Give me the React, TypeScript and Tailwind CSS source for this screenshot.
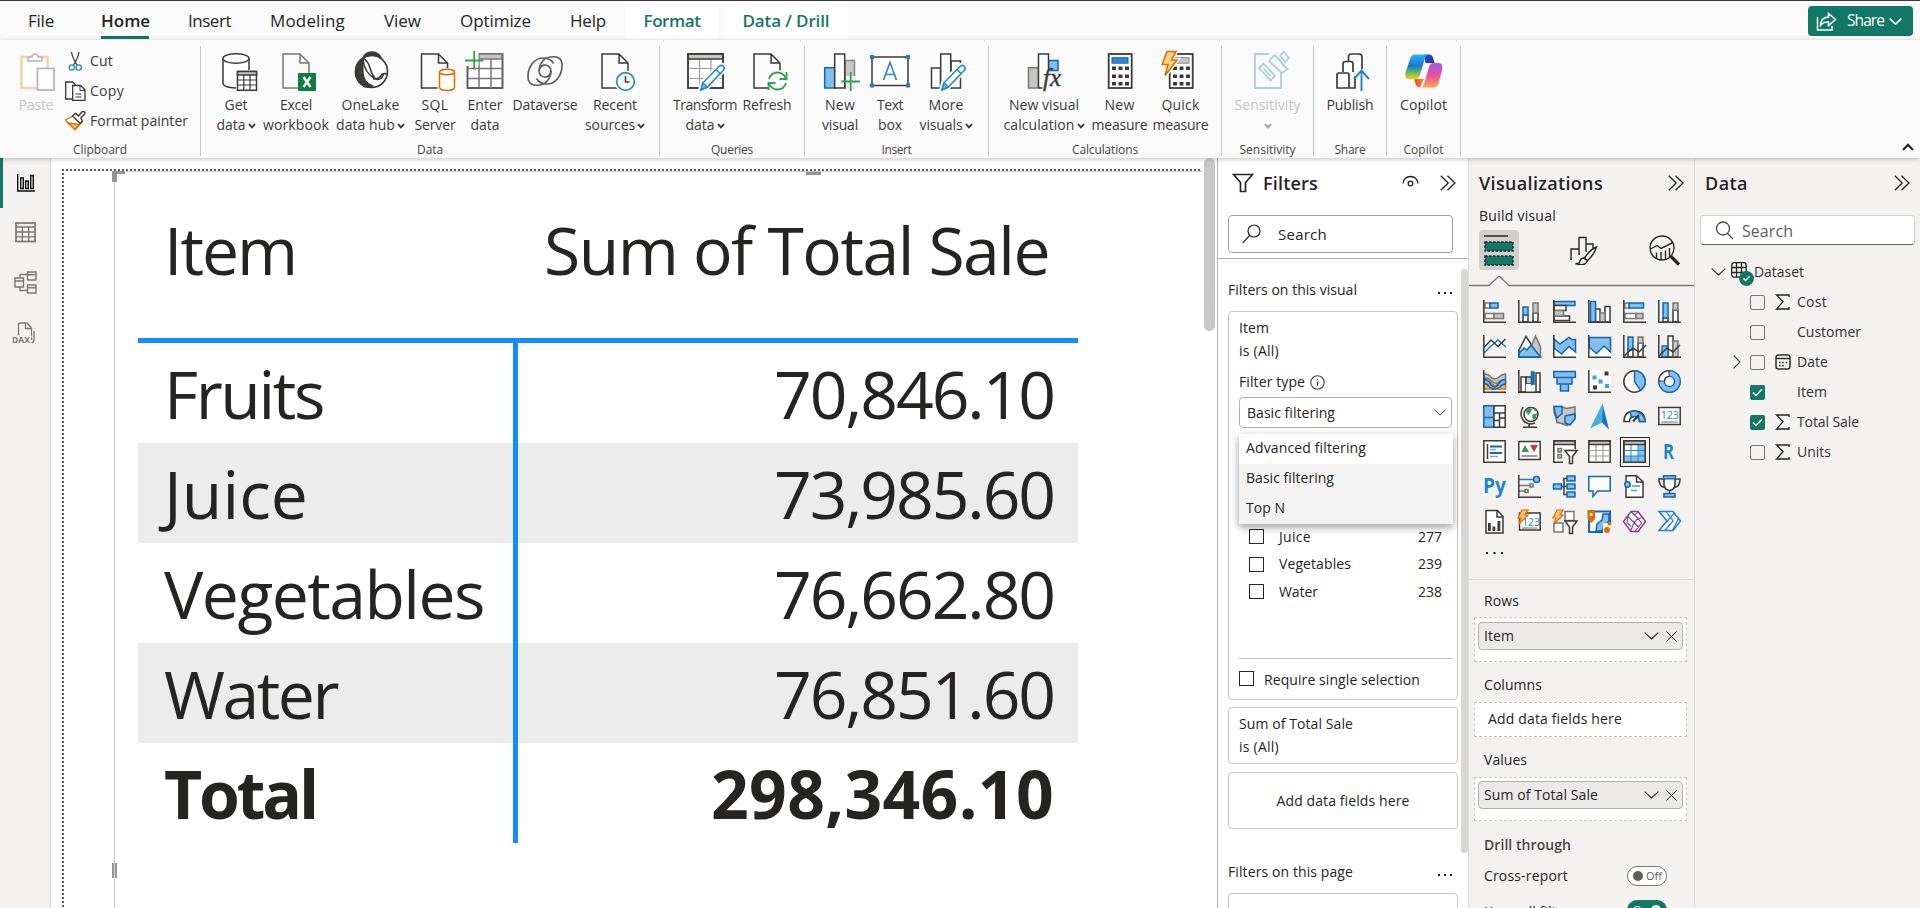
import { useLayoutEffect, useRef, type ReactNode } from "react";

const INK = "#3b3a39";
const GRAY = "#c8c6c4";
const BLUE = "#83beec";
const LINE = "#1068b0";

/** Single-line text whose tracking is tuned so that it takes exactly `w` pixels. */
function Fit({ w, children, className = "" }: { w: number; children: string; className?: string }) {
  const ref = useRef<HTMLSpanElement>(null);
  useLayoutEffect(() => {
    const el = ref.current;
    if (!el) return;
    el.style.letterSpacing = "0px";
    const natural = el.getBoundingClientRect().width;
    el.style.letterSpacing = `${(w - natural) / children.length}px`;
  }, [w, children]);
  return (
    <span ref={ref} className={`inline-block whitespace-pre ${className}`}>
      {children}
    </span>
  );
}

/* ---------- small shared glyphs ---------- */

function Caret({ className = "" }: { className?: string }) {
  return (
    <svg width="8" height="6" viewBox="0 0 8 6" className={className}>
      <path d="M1 1.2 4 4.4 7 1.2" fill="none" stroke="currentColor" strokeWidth="1.9" />
    </svg>
  );
}

function Chevron({ w = 15, h = 8, className = "" }: { w?: number; h?: number; className?: string }) {
  return (
    <svg width={w} height={h} viewBox="0 0 15 8" preserveAspectRatio="none" className={className}>
      <path d="M.7.7 7.5 7 14.3.7" fill="none" stroke="currentColor" strokeWidth="1.1" />
    </svg>
  );
}

function DoubleChevron() {
  return (
    <svg width="16" height="16" viewBox="0 0 16 16" fill="none" stroke="#252423" strokeWidth="1.3">
      <path d="M.8.7 8.2 8 .8 15.3M7.5.7 15 8l-7.500 7.300" />
    </svg>
  );
}

/* ---------- ribbon icons (40 x 40) ---------- */

function RibbonIcon({ children }: { children: ReactNode }) {
  return (
    <svg width="40" height="40" viewBox="0 0 40 40" fill="none" className="overflow-visible" stroke={INK} strokeWidth="1.5">
      {children}
    </svg>
  );
}

const Doc = ({ color = INK }: { color?: string }) => (
  <g stroke={color}>
    <path d="M7 4h17l9 9v25H7z" fill="#fafafa" />
    <path d="M24 4v9h9" />
  </g>
);

const Pencil = () => (
  <g>
    <path d="M15 40.500l2-8L34 15.500q2.500-2 5 .300 2 2.200 0 4.700L22.500 37.500z" fill="#fafafa" stroke="#fafafa" strokeWidth="4" />
    <path d="M16 39.800l2-7L34.300 16.200q2-1.700 4 0 1.800 2 .100 4L22.300 37z" fill="#fff" stroke="#1f86d0" />
    <path d="M16 39.800l2-7 4.300 4.200z" fill={BLUE} stroke="#1f86d0" />
    <path d="M31 19.500l4 4" stroke="#1f86d0" />
  </g>
);

const Grid4 = ({ x = 3 }: { x?: number }) => (
  <g transform={`translate(${x} 0)`}>
    <rect x="0" y="4" width="35" height="34" fill="#fff" />
    <path d="M11.500 9v29M23 9v29M0 18.500h35M0 28.500h35" stroke="#a19f9d" strokeWidth="1.200" />
    <rect x="0" y="4" width="35" height="5" fill={GRAY} />
    <rect x="0" y="4" width="35" height="34" />
  </g>
);

const Keypad = ({ accent }: { accent: boolean }) => (
  <g>
    <rect x="8.700" y="4" width="23" height="34" fill="#fff" strokeWidth="1.800" />
    <rect x="12" y="7.700" width="16" height="5.500" fill={accent ? "#2b88d8" : GRAY} stroke={accent ? LINE : "#8a8886"} strokeWidth="1" />
    <path
      d="M12 18.200h4m2.500 0h4m2.500 0h4M12 26.200h4m2.500 0h4m2.500 0h4M12 33.800h4m2.500 0h4m2.500 0h4"
      strokeWidth="3.500"
    />
  </g>
);

const GetDataIcon = () => (
  <RibbonIcon>
    <path d="M7 9v24.500q2 4.500 13.500 4.500V20H33V9z" fill="#fff" stroke="none" />
    <ellipse cx="20" cy="8.500" rx="13" ry="4.800" fill="#fff" />
    <path d="M7 9v24q0 4.500 13 5M33 9v11" />
    <rect x="21.500" y="21.500" width="19" height="18.800" fill="#fff" />
    <path d="M27.800 25v15M34 25v15M21 30h19M21 35h19" strokeWidth="1.200" />
    <rect x="21.500" y="21.500" width="19" height="3.500" fill={GRAY} />
  </RibbonIcon>
);

const ExcelIcon = () => (
  <RibbonIcon>
    <Doc color="#797775" />
    <rect x="22" y="23" width="18" height="18" fill="#107c41" stroke="none" rx="1" />
    <path d="M27.500 27l7 10M34.500 27l-7 10" stroke="#fff" strokeWidth="2.400" />
  </RibbonIcon>
);

const OneLakeIcon = () => (
  <RibbonIcon>
    <circle cx="20.500" cy="21.500" r="16" fill="#fff" strokeWidth="1.600" />
    <path d="M12 8q2-6 8.500-6T30 7.500q-10-5-18 .500z" fill={INK} />
    <path d="M11.500 9Q4 14 4.500 24q1.500 9 9 12.500 5 .500 8-.500-9-3.500-9.500-13T11.500 9z" fill={INK} />
    <path d="M12 9q1 14 12.500 20M12 8q5 3 7 10t5.500 11q5 2 8.500-5M22 29q7 0 9-5 3-1 5 0" />
  </RibbonIcon>
);

const SqlIcon = () => (
  <RibbonIcon>
    <g transform="translate(-.5 0)">
      <Doc />
    </g>
    <path d="M22.500 18h18v23h-18z" fill="#fafafa" stroke="none" />
    <path d="M24.500 22v15.500q1 3 7.500 3t7.500-3V22" fill="#fff" stroke="#e06c00" />
    <ellipse cx="32" cy="22" rx="7.500" ry="2.800" fill="#fff" stroke="#e06c00" />
  </RibbonIcon>
);

const EnterDataIcon = () => (
  <RibbonIcon>
    <rect x="2.500" y="4" width="35" height="34" fill="#fff" stroke="#605e5c" strokeWidth="2" />
    <path d="M14 9v29M26 9v29M2.500 18.500h35M2.500 28.500h35" stroke="#797775" />
    <path d="M14 4h23v5H14z" fill={GRAY} stroke="#797775" />
    <path d="M-.500 0h14v16h-14z" fill="#fafafa" stroke="none" />
    <path d="M0 10.500h18.500M9.200 1v18.500" stroke="#35a055" strokeWidth="1.800" />
  </RibbonIcon>
);

const Swirl = () => <path d="M26 21a6 6 0 1 1-6-6M26 21c0 6-4 13-11 14C7.500 36 3 34 3 26.500C3 16 10 8 18 8c5 0 8.500 2 10.500 5.500" />;

const DataverseIcon = () => (
  <RibbonIcon>
    <g stroke="#605e5c" strokeWidth="1.700">
      <Swirl />
      <g transform="rotate(180 20 21)">
        <Swirl />
      </g>
    </g>
  </RibbonIcon>
);

const RecentIcon = () => (
  <RibbonIcon>
    <Doc />
    <circle cx="30.500" cy="31.500" r="11" fill="#fafafa" stroke="none" />
    <circle cx="30.500" cy="31.500" r="8.800" fill="#fff" stroke="#2b88c8" strokeWidth="1.700" />
    <path d="M30.500 26v6h4" />
  </RibbonIcon>
);

const TransformIcon = () => (
  <RibbonIcon>
    <Grid4 />
    <Pencil />
  </RibbonIcon>
);

const RefreshIcon = () => (
  <RibbonIcon>
    <Doc />
    <circle cx="30.500" cy="31" r="11" fill="#fafafa" stroke="none" />
    <g stroke="#35a055" strokeWidth="1.800">
      <path d="M22 29q2-6.500 8.500-6.500 6 0 8.500 6M39 33q-2 6.500-8.500 6.500-6 0-8.500-6" />
      <path d="M39.500 22v7h-7M21.500 40v-7h7" />
    </g>
  </RibbonIcon>
);

const NewVisualIcon = () => (
  <RibbonIcon>
    <rect x="4.700" y="17.700" width="10" height="20.300" fill={BLUE} stroke={LINE} />
    <rect x="25" y="10.500" width="9.500" height="27.500" fill={GRAY} stroke="#8a8886" />
    <rect x="14.700" y="4" width="10" height="34" fill="#fff" />
    <path d="M26 26h10v14h-10z" fill="#fafafa" stroke="none" opacity=".8" />
    <path d="M21 31.500h19M30.700 22v19" stroke="#35a055" strokeWidth="1.800" />
  </RibbonIcon>
);

const TextBoxIcon = () => (
  <RibbonIcon>
    <rect x="2" y="7" width="36" height="28.500" fill="#fff" />
    <path d="M0 5h4v4H0zM36 5h4v4h-4zM0 33.500h4v4H0zM36 33.500h4v4h-4z" fill="#1f7ac0" stroke="none" />
    <path d="M13.500 30 20 12.500 26.500 30M15.500 24.500h9" stroke="#2b88d8" strokeWidth="1.700" />
  </RibbonIcon>
);

const MoreVisualsIcon = () => (
  <RibbonIcon>
    <path d="M5.500 18h9v20h-9zM25 11h9.500v27H25z" fill="#fff" />
    <rect x="14.700" y="4" width="10" height="34" fill="#fff" />
    <Pencil />
  </RibbonIcon>
);

const CalcIcon = () => (
  <RibbonIcon>
    <rect x="4.500" y="17.700" width="10" height="20.300" fill={GRAY} stroke="#797775" />
    <rect x="24.500" y="10.500" width="9.500" height="10" fill={BLUE} stroke={LINE} />
    <path d="M14.500 38V4h10v16M14.500 38h4" fill="#fff" />
    <text x="19" y="36" fontFamily="Liberation Serif, serif" fontStyle="italic" fontSize="25" fill={INK} stroke={INK} strokeWidth=".4">
      fx
    </text>
  </RibbonIcon>
);

const MeasureIcon = () => (
  <RibbonIcon>
    <Keypad accent />
  </RibbonIcon>
);

const QuickIcon = () => (
  <RibbonIcon>
    <Keypad accent={false} />
    <path d="M5.500 1.500H15L10.500 10H16L4 26l3-11.500H.800z" fill="#fafafa" stroke="#fafafa" strokeWidth="4" />
    <path d="M6 1.500h9L10.500 10H16L4 25.500l3-11H1.200z" fill="#ffd58a" stroke="#e06c00" strokeWidth="1.600" />
  </RibbonIcon>
);

const SensitivityIcon = () => (
  <RibbonIcon>
    <g stroke="#a9d0ea" strokeWidth="1.800">
      <path d="M21 4H7v34h26V22" />
      <path d="M11 18l4.500-4.500L27 26l-4.500 4.500zM15.500 18.500l7 7.500" fill="#fafafa" />
      <path d="M21 11l5.500-6 13 14-5.500 4z" fill="#fafafa" />
      <path d="M28 6l9 11M32 5.500l4-3.500 5 6-4 4z" fill="#fafafa" />
    </g>
  </RibbonIcon>
);

const PublishIcon = () => (
  <RibbonIcon>
    <g strokeWidth="1.700">
      <path d="M13 22v-8q0-2.500 2.500-2.500h5q2.500 0 2.500 2.500v8M18.500 11V7q0-3 3-3h7.500q3 0 3 3v12" />
      <path d="M19 38V25q0-2-2-2H9q-2 0-2 2v13h18V26" />
    </g>
    <path d="M31.500 41V21M24 29l7.500-8.500L39 29" stroke="#1f86c8" strokeWidth="1.900" />
  </RibbonIcon>
);

const CopilotIcon = () => (
  <RibbonIcon>
    <defs>
      <linearGradient id="cpA" x1="0" y1="0" x2="0" y2="1">
        <stop offset="0" stopColor="#27b5f5" />
        <stop offset=".45" stopColor="#1d74d8" />
        <stop offset=".7" stopColor="#55b85c" />
        <stop offset="1" stopColor="#f8d318" />
      </linearGradient>
      <linearGradient id="cpB" x1="0" y1="0" x2="0" y2="1">
        <stop offset="0" stopColor="#9a5cf2" />
        <stop offset=".5" stopColor="#e8509a" />
        <stop offset="1" stopColor="#ffa552" />
      </linearGradient>
      <linearGradient id="cpC" x1="0" y1="0" x2="1" y2="1">
        <stop offset="0" stopColor="#1a55cf" />
        <stop offset="1" stopColor="#2330a8" />
      </linearGradient>
      <linearGradient id="cpD" x1="0" y1="0" x2="1" y2="0">
        <stop offset="0" stopColor="#e8452c" />
        <stop offset="1" stopColor="#ff8a50" />
      </linearGradient>
    </defs>
    <g stroke="none">
      <path d="M20 4.500h5q3 0 4 3l1.500 5.500h-9z" fill="url(#cpC)" />
      <path d="M10 29h10l-4 8.500q-3 0-4.200-3z" fill="url(#cpD)" />
      <path d="M10.500 4.500H25q-3 0-4.200 4L16 25q-1.300 4.500-5 4.500H6q-6 0-4.500-6.500L6 9q1.400-4.500 4.500-4.500z" fill="url(#cpA)" />
      <path d="M30 13h4q5.500 0 4 7l-3.500 13q-1.300 4.500-5 4.500H16q3 0 4.200-4L25 17q1.300-4 5-4z" fill="url(#cpB)" />
    </g>
  </RibbonIcon>
);

/* ---------- ribbon ---------- */

type Item = { icon: ReactNode; l1: [string, number]; l2?: [string, number]; caret?: boolean; off?: boolean; w: string };

function RibbonItem({ icon, l1, l2, caret, off, w }: Item) {
  return (
    <div className={`flex shrink-0 flex-col items-center ${w} ${off ? "text-[#c8c6c4]" : "text-[#3b3a39]"}`}>
      {icon}
      <div className="mt-[5px] h-5 text-sm leading-5">
        <Fit w={l1[1]}>{l1[0]}</Fit>
      </div>
      <div className="flex h-5 items-center gap-0.5 text-sm leading-5">
        {l2 && <Fit w={l2[1]}>{l2[0]}</Fit>}
        {caret && <Caret className={off ? "mt-0.5 text-[#a19f9d]" : "mt-0.5"} />}
      </div>
    </div>
  );
}

function Group({ label, w, pad = "", children }: { label: [string, number]; w: string; pad?: string; children: ReactNode }) {
  return (
    <div className={`flex h-[110px] shrink-0 flex-col justify-between border-r border-[#c8c6c4] ${w}`}>
      <div className={`flex pt-1 ${pad}`}>{children}</div>
      <div className="flex h-3 items-center justify-center text-xs leading-3 text-[#484644]">
        <Fit w={label[1]}>{label[0]}</Fit>
      </div>
    </div>
  );
}

function Ribbon() {
  return (
    <div className="relative z-10 flex h-[118px] bg-[#fafafa] pt-[6px] shadow-[0_1px_5px_rgba(0,0,0,0.25)]">
      <Group label={["Clipboard", 54]} w="w-[201px]" pad="pl-[17px]">
        <div className="flex w-[38px] flex-col items-center text-[#c8c6c4]">
          <RibbonIcon>
            <path d="M5.500 7h26v31h-26z" fill="#fff" stroke="#f5d3a8" strokeWidth="2.500" />
            <path d="M12 11V7h4q0-3 3-3t3 3h4v4z" fill="#fafafa" stroke="#b8b6b4" />
            <rect x="21.500" y="18.500" width="16.500" height="21.500" fill="#fff" stroke="#b8b6b4" strokeWidth="1.800" />
          </RibbonIcon>
          <div className="mt-[5px] text-sm leading-5">
            <Fit w={35}>Paste</Fit>
          </div>
        </div>
        <div className="mt-px ml-[9px] flex flex-col gap-2.5 text-sm leading-5 text-[#3b3a39]">
          <div className="flex items-center gap-1">
            <svg width="22" height="20" viewBox="0 0 22 20" fill="none" stroke={INK} strokeWidth="1.300">
              <path d="M7.500 1q1 6 5.500 13M15 1q-1 6-5.500 13" />
              <circle cx="7.800" cy="16.500" r="2.600" stroke="#2b88c8" />
              <circle cx="14.700" cy="16.500" r="2.600" stroke="#2b88c8" />
            </svg>
            <Fit w={23}>Cut</Fit>
          </div>
          <div className="flex items-center gap-1">
            <svg width="22" height="20" viewBox="0 0 22 20" fill="none" stroke={INK} strokeWidth="1.300">
              <path d="M8.500 18H1.700V1h7l3 3" />
              <path d="M8.700 4.500h8l4.300 4.500v10.500H8.700z" fill="#fff" />
              <path d="M16 4.500V9.500h5M11.500 13h6M11.500 16h6" strokeWidth="1" />
            </svg>
            <Fit w={34}>Copy</Fit>
          </div>
          <div className="flex items-center gap-1">
            <svg width="22" height="20" viewBox="0 0 22 20" fill="none" strokeWidth="1.400">
              <path d="M1.500 9 10 4.500l7 7.500-6 6.500z" fill="#fff" stroke="#e06c00" />
              <path d="M4 12l11 1.500-4 5z" fill="#ffc46b" stroke="#e06c00" />
              <path d="M8.500 5l3-2.500 3 2.500L18 .800q2-1 3 .700 0 1.200-.700 2l-3.500 3.500 1.700 3-2.500 2.200z" fill="#fff" stroke={INK} />
            </svg>
            <Fit w={98}>Format painter</Fit>
          </div>
        </div>
      </Group>
      <Group label={["Data", 26]} w="w-[459px]" pad="pl-[5px]">
        <RibbonItem w="w-[60px]" icon={<GetDataIcon />} l1={["Get", 23]} l2={["data", 29]} caret />
        <RibbonItem w="w-[60px]" icon={<ExcelIcon />} l1={["Excel", 32]} l2={["workbook", 66]} />
        <RibbonItem w="w-[89px]" icon={<OneLakeIcon />} l1={["OneLake", 58]} l2={["data hub", 59]} caret />
        <RibbonItem w="w-[40px]" icon={<SqlIcon />} l1={["SQL", 27]} l2={["Server", 41]} />
        <RibbonItem w="w-[60px]" icon={<EnterDataIcon />} l1={["Enter", 35]} l2={["data", 29]} />
        <RibbonItem w="w-[60px]" icon={<DataverseIcon />} l1={["Dataverse", 65]} />
        <RibbonItem w="w-[80px]" icon={<RecentIcon />} l1={["Recent", 44]} l2={["sources", 50]} caret />
      </Group>
      <Group label={["Queries", 42]} w="w-[145px]" pad="pl-[15px]">
        <RibbonItem w="w-[60px]" icon={<TransformIcon />} l1={["Transform", 64]} l2={["data", 29]} caret />
        <RibbonItem w="w-[64px]" icon={<RefreshIcon />} l1={["Refresh", 49]} />
      </Group>
      <Group label={["Insert", 30]} w="w-[184px]" pad="pl-[10px]">
        <RibbonItem w="w-[50px]" icon={<NewVisualIcon />} l1={["New", 30]} l2={["visual", 36]} />
        <RibbonItem w="w-[50px]" icon={<TextBoxIcon />} l1={["Text", 26]} l2={["box", 24]} />
        <RibbonItem w="w-[62px]" icon={<MoreVisualsIcon />} l1={["More", 35]} l2={["visuals", 43]} caret />
      </Group>
      <Group label={["Calculations", 66]} w="w-[233px]" pad="pl-[11px]">
        <RibbonItem w="w-[88px]" icon={<CalcIcon />} l1={["New visual", 70]} l2={["calculation", 71]} caret />
        <RibbonItem w="w-[63px]" icon={<MeasureIcon />} l1={["New", 30]} l2={["measure", 56]} />
        <RibbonItem w="w-[59px]" icon={<QuickIcon />} l1={["Quick", 38]} l2={["measure", 56]} />
      </Group>
      <Group label={["Sensitivity", 56]} w="w-[92px]">
        <RibbonItem w="w-[91px]" icon={<SensitivityIcon />} l1={["Sensitivity", 66]} caret off />
      </Group>
      <Group label={["Share", 31]} w="w-[73px]">
        <RibbonItem w="w-[72px]" icon={<PublishIcon />} l1={["Publish", 47]} />
      </Group>
      <Group label={["Copilot", 40]} w="w-[74px]">
        <RibbonItem w="w-[73px]" icon={<CopilotIcon />} l1={["Copilot", 47]} />
      </Group>
      <div className="flex flex-1 items-end justify-end pr-1.5 pb-[7px]">
        <svg width="12" height="8" viewBox="0 0 12 8">
          <path d="M1 7 6 1.800 11 7" fill="none" stroke="#252423" strokeWidth="2" />
        </svg>
      </div>
    </div>
  );
}

function MenuBar() {
  const rest: [string, number][] = [
    ["Insert", 43],
    ["Modeling", 75],
    ["View", 37],
    ["Optimize", 71],
    ["Help", 36],
  ];
  return (
    <div className="flex h-10 items-start border-t border-[#3b3a39] bg-[#fafafa] text-[17px] leading-[22px] text-[#252423]">
      <div className="flex gap-[39px] pt-[9px] pl-7">
        <div className="w-[34px]">
          <Fit w={26}>File</Fit>
        </div>
        <div className="flex h-[29px] w-12 flex-col justify-between font-semibold">
          <Fit w={48}>Home</Fit>
          <div className="h-[3px] bg-[#117865]" />
        </div>
        {rest.map(([t, w]) => (
          <Fit key={t} w={w}>
            {t}
          </Fit>
        ))}
      </div>
      <div className="mt-0.5 ml-[19px] flex h-9 gap-[5px] font-semibold text-[#117865]">
        <div className="w-[94px] bg-white pt-[7px] text-center">
          <Fit w={57}>Format</Fit>
        </div>
        <div className="w-[124px] bg-white pt-[7px] text-center">
          <Fit w={87}>Data / Drill</Fit>
        </div>
      </div>
      <div className="mt-[5px] mr-[7px] ml-auto flex h-[30px] w-[105px] items-center rounded bg-[#117865] pl-2 text-base text-white">
        <svg width="21" height="19" viewBox="0 0 21 19" fill="none" stroke="#fff" strokeWidth="1.500">
          <path d="M1.500 5v13h14.500v-4" />
          <path d="M4.500 13.500q0-8 8-8.500V1.500L19.500 7.500l-7 6V10q-5-.500-8 3.500z" />
        </svg>
        <Fit w={37} className="ml-2.5 text-[15.500px]">
          Share
        </Fit>
        <Chevron w={13} h={7} className="ml-[5px] [&_path]:[stroke-width:1.8]" />
      </div>
    </div>
  );
}

/* ---------- left rail ---------- */

function Rail() {
  return (
    <div className="flex w-[51px] shrink-0 flex-col border-r border-[#d8d6d4] bg-[#f3f2f1]">
      <div className="flex h-[50px] items-center border-l-[3px] border-[#117865] pl-[13px]">
        <svg width="20" height="20" viewBox="0 0 20 20" fill="none" stroke="#111" strokeWidth="1.400">
          <path d="M1.700 1v17H19M4.700 5h2.600v10.500H4.700zM9.700 8h2.600v7.500H9.700zM14.700 2.500h2.600v13h-2.600z" />
        </svg>
      </div>
      <div className="flex h-[48px] items-center pl-[15px]">
        <svg width="21" height="21" viewBox="0 0 21 21" fill="none" stroke="#797775" strokeWidth="1.300">
          <rect x="1" y="1" width="19" height="18.500" strokeWidth="1.700" />
          <path d="M1 5h19M1 10h19M1 14.800h19M7.300 5v14.500M13.700 5v14.500" />
        </svg>
      </div>
      <div className="flex h-[53px] items-center pl-[14px]">
        <svg width="23" height="23" viewBox="0 0 23 23" fill="none" stroke="#797775" strokeWidth="1.400">
          <path d="M1 7h8.500v9H1zM13.500 1H22v8h-8.500zM13.500 14H22v8h-8.500zM1 10h8.500M13.500 3.800H22M13.500 16.800H22M6 7V3.500h7.500M6 16v3.500h7.500" />
        </svg>
      </div>
      <div className="flex h-[48px] items-center pl-[12px]">
        <svg width="24" height="22" viewBox="0 0 24 22" fill="none" stroke="#797775" strokeWidth="1.300">
          <path d="M6.500 13V2.500q0-1.500 1.500-1.500H15l4.500 5v12M13.500 1v5.500h5.500M22 9v9q0 3-4 3" />
          <text x="0" y="21" fontFamily="Open Sans, sans-serif" fontSize="8.500" fontWeight="700" fill="#797775" stroke="#f3f2f1" strokeWidth="2.500" paintOrder="stroke">
            DAX
          </text>
        </svg>
      </div>
    </div>
  );
}

/* ---------- canvas ---------- */

const rows: { name: string; nw: number; value: string; vw: number; alt?: boolean; bold?: boolean }[] = [
  { name: "Fruits", nw: 159, value: "70,846.10", vw: 280 },
  { name: "Juice", nw: 144, value: "73,985.60", vw: 280, alt: true },
  { name: "Vegetables", nw: 320, value: "76,662.80", vw: 280 },
  { name: "Water", nw: 173, value: "76,851.60", vw: 280, alt: true },
  { name: "Total", nw: 152, value: "298,346.10", vw: 343, bold: true },
];

function Canvas() {
  return (
    <div className="relative flex-1 overflow-hidden bg-white pt-[11px] pl-[11px]">
      <div className="h-0.5 w-[1140px] bg-[repeating-linear-gradient(90deg,#605e5c_0_2px,#fff_2px_4px)]" />
      <div className="flex h-[740px]">
        <div className="w-0.5 bg-[repeating-linear-gradient(180deg,#fff_0_2px,#605e5c_2px_4px)]" />
        <div className="relative ml-[50px] w-[1088px] border-t border-l border-[#c8c6c4] text-[66px] leading-[100px] text-[#252423]">
          <div className="absolute -top-px -left-[3px] h-[11px] w-[13px] border-t-[3px] border-l-[5px] border-[#979593]" />
          <div className="absolute top-0 left-[691px] h-[3px] w-[15px] bg-[#979593]" />
          <div className="absolute top-[691px] -left-[3px] flex h-[15px] w-[5px] justify-center bg-[#979593]">
            <div className="w-px bg-[#d8d6d4]" />
          </div>
          <div className="ml-[23px] w-[940px]">
            <div className="flex h-[171px] justify-between border-b-[5px] border-[#118dff] pt-[27px] pr-[29px] pl-[26px]">
              <Fit w={132}>Item</Fit>
              <Fit w={505}>Sum of Total Sale</Fit>
            </div>
            {rows.map((r) => (
              <div
                key={r.name}
                className={`grid h-[100px] grid-cols-[375px_5px_560px] ${r.alt ? "bg-[#ececec]" : ""} ${r.bold ? "font-bold" : ""}`}
              >
                <div className="pl-[26px]">
                  <Fit w={r.nw}>{r.name}</Fit>
                </div>
                <div className="bg-[#118dff]" />
                <div className="pr-6 text-right">
                  <Fit w={r.vw}>{r.value}</Fit>
                </div>
              </div>
            ))}
          </div>
        </div>
      </div>
      <div className="absolute top-0 right-[2px] h-[173px] w-[11px] rounded-full bg-[#c8c8c8]" />
    </div>
  );
}

/* ---------- filters ---------- */

const Box = () => <div className="size-[15px] shrink-0 border border-[#252423] bg-white" />;

function Dots() {
  return (
    <svg width="15" height="2" viewBox="0 0 15 2" fill="#252423" className="mt-1.5">
      <path d="M0 0h2v2H0zM6 0h2v2H6zM12 0h2v2h-2z" />
    </svg>
  );
}

function Filters() {
  const values: [string, number, string][] = [
    ["Juice", 32, "277"],
    ["Vegetables", 72, "239"],
    ["Water", 39, "238"],
  ];
  return (
    <div className="relative flex w-[251px] shrink-0 flex-col overflow-hidden border-l border-[#b3b0ad] bg-white text-sm leading-5 text-[#252423]">
      <div className="flex h-[50px] shrink-0 items-center pl-[14px]">
        <svg width="22" height="20" viewBox="0 0 22 20" fill="none" stroke="#252423" strokeWidth="1.700">
          <path d="M1.500 1.500h19l-7 8v9h-5v-9z" />
        </svg>
        <Fit w={55} className="ml-[9px] text-lg font-semibold">
          Filters
        </Fit>
        <svg width="17" height="13" viewBox="0 0 17 13" fill="none" stroke="#252423" strokeWidth="1.300" className="-mt-[3px] ml-[84px]">
          <path d="M1 8.500Q2 1.500 8.500 1.500T16 8.500" />
          <circle cx="8.500" cy="8.500" r="2.300" />
        </svg>
        <div className="ml-[21px]">
          <DoubleChevron />
        </div>
      </div>
      <div className="h-[51px] shrink-0 border-b border-[#b3b0ad] pt-[7px] pl-[10px]">
        <div className="flex h-[38px] w-[225px] items-center rounded-sm border border-[#a19f9d] pl-[13px]">
          <svg width="19" height="20" viewBox="0 0 19 20" fill="none" stroke="#252423" strokeWidth="1.200">
            <circle cx="12" cy="7" r="6" />
            <path d="M7.500 11.500 .800 18.800" />
          </svg>
          <Fit w={49} className="ml-[17px] text-[15px]">
            Search
          </Fit>
        </div>
      </div>
      <div className="shrink-0 pt-5 pl-[10px]">
        <div className="flex h-[22px] w-[225px] items-center justify-between">
          <Fit w={129}>Filters on this visual</Fit>
          <Dots />
        </div>
        <div className="mt-2.5 h-[389px] w-[230px] rounded-sm border border-[#c8c6c4] pt-1.5 pl-[10px]">
          <div className="h-5">
            <Fit w={30}>Item</Fit>
          </div>
          <div className="mt-[3px] h-5">
            <Fit w={40}>is (All)</Fit>
          </div>
          <div className="mt-[11px] flex h-5 items-center gap-[5px]">
            <Fit w={66}>Filter type</Fit>
            <svg width="15" height="15" viewBox="0 0 15 15" fill="none" stroke="#484644" strokeWidth="1.100">
              <circle cx="7.500" cy="7.500" r="6.700" />
              <path d="M7.500 6.500V11M7.500 4v1.200" />
            </svg>
          </div>
          <div className="relative mt-[5px] flex h-[31px] w-[213px] items-center justify-between rounded-sm border border-[#b3b0ad] pr-[5px] pl-[7px]">
            <Fit w={88}>Basic filtering</Fit>
            <Chevron w={12} h={7} />
            <div className="absolute top-9 -left-px z-10 w-[214px] bg-[#f3f3f3] leading-[28px] shadow-[0_3px_8px_rgba(0,0,0,0.4)]">
              <div className="h-[30px] bg-white pl-[7px]">
                <Fit w={120}>Advanced filtering</Fit>
              </div>
              <div className="h-[30px] pl-[7px]">
                <Fit w={88}>Basic filtering</Fit>
              </div>
              <div className="h-[30px] pl-[7px]">
                <Fit w={39}>Top N</Fit>
              </div>
            </div>
          </div>
          <div className="mt-[95px] w-[203px] pl-[10px]">
            {values.map(([name, w, n]) => (
              <div key={name} className="flex h-[27.500px] items-center">
                <Box />
                <Fit w={w} className="ml-[15px]">
                  {name}
                </Fit>
                <Fit w={24} className="ml-auto">
                  {n}
                </Fit>
              </div>
            ))}
          </div>
          <div className="mt-[52px] w-[213px] border-t border-[#c8c6c4]" />
          <div className="mt-[11px] flex h-5 items-center">
            <div className="-mt-[3px]">
              <Box />
            </div>
            <Fit w={156} className="ml-[10px]">
              Require single selection
            </Fit>
          </div>
        </div>
        <div className="mt-[7px] h-[57px] w-[230px] rounded-sm border border-[#c8c6c4] pt-1.5 pl-[10px]">
          <div className="h-5">
            <Fit w={114}>Sum of Total Sale</Fit>
          </div>
          <div className="mt-[3px] h-5">
            <Fit w={40}>is (All)</Fit>
          </div>
        </div>
        <div className="mt-2 flex h-[57px] w-[230px] items-center justify-center rounded-sm border border-[#c8c6c4]">
          <Fit w={133}>Add data fields here</Fit>
        </div>
        <div className="mt-8 flex h-[22px] w-[225px] items-center justify-between">
          <Fit w={125}>Filters on this page</Fit>
          <Dots />
        </div>
        <div className="mt-2.5 h-[57px] w-[230px] rounded-sm border border-[#c8c6c4]" />
      </div>
      <div className="absolute top-[111px] right-0 h-[584px] w-[7px] rounded-full bg-[#d8d7d6]" />
    </div>
  );
}

/* ---------- visual gallery (23 x 23 icons) ---------- */

const Axis = () => <path d="M.800 0v22.200H23" stroke={INK} />;
const Gy = "#797775";

const gallery: ReactNode[] = [
  <>
    <path d="M2 3h5v5H2zM2 13.500h9v5H2z" fill="#fff" stroke={Gy} />
    <path d="M7 3h8v5H7z" fill={BLUE} stroke={LINE} />
    <path d="M11 13.500h9.500v5H11z" fill={GRAY} stroke={Gy} />
    <Axis />
  </>,
  <>
    <path d="M5 15h5v7H5zM15 13h5v9h-5z" fill="#fff" stroke={INK} />
    <path d="M5 7h5v8H5z" fill={BLUE} stroke={LINE} />
    <path d="M15 3h5v10h-5z" fill={GRAY} stroke={Gy} />
    <Axis />
  </>,
  <>
    <path d="M1 1.500h21v4H1z" fill={BLUE} stroke={LINE} />
    <path d="M1 5.500h12v5H1zM1 16h15.500v4.500H1z" fill="#fff" stroke={INK} />
    <path d="M1 10.500h9.500V16H1z" fill={GRAY} stroke={Gy} />
    <Axis />
  </>,
  <>
    <path d="M7.500 9h4.500v13H7.500zM17 6.500h5V22h-5z" fill="#fff" stroke={INK} />
    <path d="M2.500 1.500h5V22h-5z" fill={BLUE} stroke={LINE} />
    <path d="M12 13h5v9h-5z" fill={GRAY} stroke={Gy} />
    <Axis />
  </>,
  <>
    <path d="M2 3h4v5H2zM2 13.500h11v5H2z" fill="#fff" stroke={Gy} />
    <path d="M6 3h14.500v5H6z" fill={BLUE} stroke={LINE} />
    <path d="M13 13.500h7v5h-7z" fill={GRAY} stroke={Gy} />
    <Axis />
  </>,
  <>
    <path d="M5 18h5v4H5zM15 10h5v12h-5z" fill="#fff" stroke={INK} />
    <path d="M5 3h5v15H5z" fill={BLUE} stroke={LINE} />
    <path d="M15 3h5v7h-5z" fill={GRAY} stroke={Gy} />
    <Axis />
  </>,
  <>
    <path d="M1 18 7 12l8-7 8 7" stroke="#1f7ac0" />
    <path d="M1 12.500 8 5l7 6.500L22.500 4" stroke={INK} />
    <Axis />
  </>,
  <>
    <path d="M1 15 8 1.500 15 12v10H1z" fill="#fff" stroke={INK} />
    <path d="M11 17 17.500 1 22.500 12v10H11z" fill={GRAY} stroke={Gy} />
    <path d="M1 22V18l5-5 3 2 4-5 9.500 12z" fill={BLUE} stroke={LINE} />
    <path d="M.800 14v8.200H23" stroke={LINE} />
  </>,
  <>
    <path d="M1 14l6 4.500 8-7 7.500 6V22H1z" fill="#fff" stroke="none" />
    <path d="M1 4l6 5 9-6.500 3 2h3.500V17L16 11.500 8.500 19 1 13z" fill={BLUE} stroke={LINE} />
    <Axis />
  </>,
  <>
    <path d="M1 2h21.500v20H1z" fill="#fff" stroke="none" />
    <path d="M1 2.500h21.500V17L16 11l-7.500 7.500L1 12z" fill={BLUE} stroke={LINE} />
    <Axis />
  </>,
  <>
    <path d="M5 14h5v8H5zM15 8h5v14h-5z" fill="#fff" stroke={INK} />
    <path d="M5 2h5v13H5z" fill={BLUE} stroke={LINE} />
    <path d="M15 2h5v6h-5z" fill={GRAY} stroke={Gy} />
    <path d="M1 21 10 13l6 4 7-7" stroke={INK} />
    <Axis />
  </>,
  <>
    <path d="M10 1h5v21h-5z" fill="#fff" stroke={INK} />
    <path d="M4 11h6v11H4z" fill={BLUE} stroke={LINE} />
    <path d="M15 6h5v16h-5z" fill={GRAY} stroke={Gy} />
    <path d="M1 21 9 13l6 4 7-7" stroke={INK} />
    <Axis />
  </>,
  <>
    <path d="M1 12h6l5 4 4-3h6.500v6H1z" fill="#fbb35c" stroke="#e06c00" />
    <path d="M1 4q5 0 8 4 4 2 7-1 3-3 6.500-3v6q-5 0-8 3-3 1-6-2-3-3-7.500-3z" fill={GRAY} stroke={Gy} />
    <path d="M1 9q5 1 7 6 3.500 4 7 0 3-6 7.500-5v4q-3.500 0-5.500 3-5.500 4-10.500 0-2-3-5.500-4z" fill={BLUE} stroke={LINE} />
    <Axis />
  </>,
  <>
    <path d="M3 7h5v15H3zM18 3h4v19h-4z" fill="#fff" stroke={INK} />
    <path d="M8 7h6v7H8z" fill={GRAY} stroke={INK} />
    <path d="M8 14h5v8H8z" fill="#fff" stroke="none" />
    <path d="M13.500 2h2.500v12h-2.500z" fill="#1f7ac0" stroke={LINE} />
    <Axis />
  </>,
  <>
    <path d="M.800 1.500h21.500v6H.800zM4 7.500h15V14H4zM7.500 14h8v7h-8z" fill={BLUE} stroke={LINE} />
  </>,
  <>
    <path d="M1 1h22v21H1z" fill="#fff" stroke="none" opacity=".6" />
    <path d="M16.500 1.500h4v4h-4zM5 15.500h4v4H5z" fill={INK} stroke="none" />
    <path d="M4.500 5.500h4v4h-4zM10.500 9.500h4v4h-4zM17 14h4v4h-4z" fill="#4a9fdc" stroke="none" />
    <Axis />
  </>,
  <>
    <circle cx="11.500" cy="11.500" r="10.700" fill="#fff" stroke={INK} />
    <path d="M11.500.800a10.700 10.700 0 0 1 6 19.500l-6-8.800z" fill={BLUE} stroke={LINE} />
  </>,
  <>
    <circle cx="11.500" cy="11.500" r="8" stroke={LINE} strokeWidth="7" />
    <circle cx="11.500" cy="11.500" r="8" stroke={BLUE} strokeWidth="4.500" />
    <path d="M3.500 11.500a8 8 0 0 1 8-8" stroke={INK} strokeWidth="7" />
    <path d="M3.500 10.500a8 8 0 0 1 7-7" stroke="#fff" strokeWidth="4.500" />
  </>,
  <>
    <path d="M.800.800H11v21.400H.800z" fill={BLUE} stroke={LINE} />
    <path d="M11 .800h11.200v21.400H11zM11 8h11M11 15.500h5.500M16.500 8v14.200M16.500 13h6" fill="#fff" stroke={INK} />
    <path d="M.800 12.500H11" stroke={LINE} />
  </>,
  <>
    <circle cx="13" cy="9.500" r="7" fill="#fff" stroke={INK} />
    <path d="M8 6q3-3 6-2l-1 3-3 3zM14 10l5-2-1 5-3 2zM16 3.500l3 2-2 1z" fill="#2d9a4c" stroke="none" />
    <path d="M5 2Q1 9 5 15t12 3M11 18v4M5 22.200h14" stroke={INK} />
  </>,
  <>
    <path d="M1 1.500h8l4 2 9-1.500v11l-5 2.500-3 5-5-2-5-1-1-5-2-5z" fill={GRAY} stroke={Gy} />
    <path d="M1 1.500h8v7L4 13 2 8zM12 11l10-2v5l-5 6-5-2z" fill={BLUE} stroke={LINE} />
  </>,
  <>
    <path d="M14.500-1 2 24l12-6z" fill="#45b0dc" stroke="none" transform="translate(0 -.5)" />
    <path d="M14.500-1l6.500 26-7-7z" fill="#1274c8" stroke="none" transform="translate(0 -.5)" />
  </>,
  <>
    <path d="M1 16.500Q1 6 11.500 6T22 16.500h-5.500q0-5-5-5t-5 5z" fill="#fff" stroke={INK} />
    <path d="M7 7q4-2 9 .500 6 3 6 9h-5.500q0-4-3-5-4-.500-5 1z" fill={BLUE} stroke={LINE} />
    <path d="M10 16.500 16 10" stroke={INK} strokeWidth="2.200" />
  </>,
  <>
    <path d="M.800 2.500h21.400v17H.800z" fill="#fff" stroke={INK} />
    <text x="2.800" y="14" fontFamily="Open Sans, sans-serif" fontSize="10.500" fill="#1f86c8" stroke="none">
      123
    </text>
    <path d="M3 17h17" stroke="#a19f9d" />
  </>,
  <>
    <path d="M.800.800h21.400v21.400H.800z" fill="#fff" stroke={INK} />
    <path d="M4.500 4v15" stroke={INK} />
    <path d="M7 6.500h12M7 13h12" stroke={LINE} strokeWidth="2" />
    <path d="M7 9.500h6M7 16.500h8" stroke="#a19f9d" />
  </>,
  <>
    <path d="M.800 1.500h21.400v18H.800z" fill="#fff" stroke={INK} />
    <path d="M3.500 12 7 5l4 7z" fill="#2d9a4c" stroke="none" />
    <path d="M12 5h8l-4 7z" fill="#e02c34" stroke="none" />
    <path d="M3.500 16h16" stroke={Gy} />
  </>,
  <>
    <path d="M.800.800h21.400v21.400H.800z" fill="#fff" stroke={INK} />
    <path d="M1 1h21v3.500H1z" fill={GRAY} stroke={INK} />
    <path d="M5 8.500h3.500V12H5zM5 14.500h3.500V18H5z" fill={GRAY} stroke={Gy} />
    <path d="M10 9h14v14H10z" fill="#f3f2f1" stroke="none" />
    <path d="M12 10.500h12l-4.500 6v7h-3v-7z" fill="#fff" stroke={INK} />
  </>,
  <>
    <path d="M.800.800h21.400v21.400H.800z" fill="#fff" stroke={INK} />
    <path d="M8 4.500V22M15 4.500V22M1 10.500h21M1 16h21" stroke="#a19f9d" strokeWidth="1.200" />
    <path d="M1 1h21v3.500H1z" fill={GRAY} stroke={INK} />
  </>,
  <>
    <path d="M.800.800h21.400v21.400H.800z" fill="#fff" stroke={INK} />
    <path d="M1 16h7v6H1zM8 16h7v6H8zM15 5h7v17h-7z" fill={BLUE} stroke="none" />
    <path d="M8 4.500V22M15 4.500V22M1 10.500h21M1 16h21" stroke="#1f86d0" strokeWidth="1" />
    <path d="M.800.800h21.400v21.400H.800z" stroke={INK} />
    <path d="M1 1h21v3.500H1z" fill={GRAY} stroke={INK} />
  </>,
  <text x="5" y="19" fontFamily="Open Sans, sans-serif" fontSize="21" fontWeight="700" fill="#1f86c8" stroke="none" textLength="11" lengthAdjust="spacingAndGlyphs">
    R
  </text>,
  <text x="0" y="18" fontFamily="Open Sans, sans-serif" fontSize="21" fontWeight="700" fill="#1f86c8" stroke="none" textLength="23" lengthAdjust="spacingAndGlyphs">
    Py
  </text>,
  <>
    <path d="M1 4.500h15" stroke="#1f7ac0" />
    <circle cx="18.500" cy="4.500" r="3" fill={BLUE} stroke={LINE} />
    <path d="M1 10.500h11M1 16h6" stroke={Gy} />
    <path d="M12 9h3v3h-3zM7 14.500h3v3H7z" fill="#fff" stroke={Gy} />
    <Axis />
  </>,
  <>
    <path d="M8 11.500h6M14 3.500h-3v16h3" stroke={INK} />
    <path d="M.500 9h8v5h-8zM14 1h8v5h-8zM14 9h8v5h-8zM14 17h8v5h-8z" fill={BLUE} stroke={LINE} />
  </>,
  <path d="M.800 1.500h21.400v14.500H9.500L5 21.500V16H.800z" fill="#fff" stroke={LINE} />,
  <>
    <path d="M3 .800h10.500l6.500 6v15.400H3z" fill="#fff" stroke={INK} />
    <path d="M13.500 1v6H20" stroke={INK} />
    <path d="M9 11h8M8 15.500h6" stroke="#4a9fdc" />
    <path d="M0 7h5v5H0z" fill="#f3f2f1" stroke="none" />
    <circle cx="4.500" cy="9.500" r="2.700" fill={BLUE} stroke={LINE} />
  </>,
  <>
    <path d="M6 4H1q0 8 6 8.500M17 4h5q0 8-6 8.500" stroke={INK} />
    <path d="M6 1.500h11V10q-1 5-5.500 5.500Q7 15 6 10z" fill="#fff" stroke={INK} />
    <path d="M11.500 15v4" stroke={INK} />
    <path d="M5.500.800h12v3h-12zM6 18.500h11v3.500H6z" fill={BLUE} stroke={LINE} />
  </>,
  <>
    <path d="M3 .500h11.500L20 6.500V23H3z" fill="#fff" stroke={INK} />
    <path d="M14 .500v6.500h6" stroke={INK} />
    <path d="M5 13h2.800v8H5zM9.500 16.500h2.800V21H9.500zM14.500 11h2.800v10h-2.800z" fill={INK} stroke="none" />
  </>,
  <>
    <path d="M1.500 3h20.700v17H1.500z" fill="#fff" stroke={INK} />
    <text x="4" y="15.500" fontFamily="Open Sans, sans-serif" fontSize="10.500" fill="#1f86c8" stroke="none">
      123
    </text>
    <path d="M4 18h15" stroke="#a19f9d" />
    <path d="M4 0h6L7 5h3L1 14l2-6H0z" fill="#ffc46b" stroke="#e06c00" strokeWidth="1.200" />
  </>,
  <>
    <path d="M12 1.500h9v9h-9zM1 13h9v9H1z" fill="#fff" stroke={Gy} />
    <path d="M12 11h12l-4.500 6v6.500h-3V17z" fill="#fff" stroke={INK} />
    <path d="M4 0h6L7 5h3L1 14l2-6H0z" fill="#ffc46b" stroke="#e06c00" strokeWidth="1.200" />
  </>,
  <>
    <path d="M1 1.500h21v20.500H1z" fill="#fff" stroke={LINE} strokeWidth="2" />
    <path d="M21 4h-6l-1 6-5 4-1 7h6l2-5 5-5z" fill={BLUE} stroke={LINE} />
    <path d="M15 13h9v11h-9z" fill="#f3f2f1" stroke="none" />
    <path d="M-.500 0h7.500v9L3.500 13-.500 9z" fill="#e06c00" stroke="none" />
    <circle cx="3.200" cy="4.500" r="1.500" fill="#fff" stroke="none" />
    <circle cx="19" cy="20" r="3" fill="#e06c00" stroke="none" />
    <circle cx="21.500" cy="13.500" r="2" fill="#e06c00" stroke="none" />
  </>,
  <>
    <path d="M8 1.500h7l7.500 10L15 21.500H8L.500 11.500z" fill="#fff" stroke="#8b3a9c" />
    <path d="M8 1.500l7 7-4 4-6-6M15 1.500l-3.500 4M15 8.500l4.500-1M15 8.500l3.500 4.500-6.500 8.500M11 12.500l-3.500 9M11 12.500l5 5M5 6.500l-1 6 4 4" stroke="#8b3a9c" strokeWidth="1.100" />
  </>,
  <>
    <path d="M1 1.500h14l7.500 9.500L15 20.500H1L9 11z" fill="#fff" stroke="#1a7ee0" />
    <path d="M8 1.500l7 9.500-8 9.500M6 14.500L16.500 3M14.500 20.500L20.500 8.500" stroke="#1a7ee0" strokeWidth="1.200" />
  </>,
];

function Chip({ label, w }: { label: string; w: number }) {
  return (
    <div className="flex h-7 items-center rounded-sm border border-[#b3b0ad] bg-[#ebeae9] pr-[5px] pl-[5px]">
      <Fit w={w}>{label}</Fit>
      <Chevron w={15} h={8} className="ml-auto" />
      <svg width="11" height="11" viewBox="0 0 11 11" className="ml-[7px]">
        <path d="M.600.600l9.800 9.800M10.400.600.600 10.400" stroke="#252423" strokeWidth="1" />
      </svg>
    </div>
  );
}

function Visualizations() {
  return (
    <div className="flex w-[226px] shrink-0 flex-col overflow-hidden border-l border-[#dcdad8] bg-[#f3f2f1] text-sm leading-5 text-[#252423]">
      <div className="flex h-[50px] shrink-0 items-center justify-between pr-[10px] pl-[10px]">
        <Fit w={124} className="text-lg font-semibold">
          Visualizations
        </Fit>
        <DoubleChevron />
      </div>
      <div className="h-[22px] shrink-0 pl-[10px] leading-[15px] font-medium">
        <Fit w={77}>Build visual</Fit>
      </div>
      <div className="flex h-10 shrink-0 items-center pl-[10px]">
        <div className="flex size-10 items-center justify-center rounded-sm bg-[#d2d0ce]">
          <svg width="30" height="32" viewBox="0 0 30 32">
            <path d="M0 2h24" stroke="#252423" strokeWidth="1.500" />
            <rect x="1" y="8" width="28" height="9" fill="#117865" stroke="#252423" strokeWidth="1.500" strokeDasharray="2.500 1.500" />
            <rect x="1" y="22" width="28" height="9" fill="#117865" stroke="#252423" strokeWidth="1.500" strokeDasharray="2.500 1.500" />
          </svg>
        </div>
        <svg width="28" height="29" viewBox="0 0 28 29" fill="none" stroke="#252423" strokeWidth="1.400" className="ml-[51px]">
          <path d="M1 24V13h8M9 19V1.500h7V16M16 8h7v4" />
          <path d="M26.500 11q-6 2-12 11l2.500 3q7-6 9.500-14z" fill="#f3f2f1" />
          <path d="M13.500 22q-3 0-3.500 3.500-1 3-4.500 2 5 2 9 .500 3-1.500 2.500-3.500z" fill="#f3f2f1" />
        </svg>
        <svg width="31" height="31" viewBox="0 0 31 31" fill="none" stroke="#252423" strokeWidth="1.400" className="ml-[51px]">
          <circle cx="13" cy="13" r="12" />
          <path d="M1.500 14 8 10.500l4 3L24 7.500M7.500 24v-6.500M12 25v-8M16.500 24.500v-9M20.500 22v-9" />
          <path d="M22 21.500l8 8" strokeWidth="3.200" />
        </svg>
      </div>
      <svg width="225" height="12" viewBox="0 0 225 12" fill="none" stroke="#797775" strokeWidth="1.300" className="mt-1.5 shrink-0">
        <path d="M0 9.500h20l10-9.500 10 9.500h185" />
      </svg>
      <div className="mt-[6px] grid shrink-0 auto-rows-[35px] grid-cols-[repeat(6,35px)] pl-2">
        {gallery.map((g, i) => (
          <div key={i} className="flex items-center justify-center">
            <div className={i === 28 ? "-m-1 flex size-[30px] items-center justify-center border border-[#252423]" : "flex"}>
              <svg width="23" height="23" viewBox="0 0 23 23" fill="none" strokeWidth="1.500" className="shrink-0 overflow-visible">
                {g}
              </svg>
            </div>
          </div>
        ))}
      </div>
      <div className="h-[41px] shrink-0 border-b border-[#dcdad8] pt-[13px] pl-[17px]">
        <svg width="18" height="2" viewBox="0 0 18 2" fill="#252423">
          <path d="M0 0h2v2H0zM7.500 0h2v2h-2zM15 0h2v2h-2z" />
        </svg>
      </div>
      <div className="mt-[11px] h-5 shrink-0 pl-[15px]">
        <Fit w={35}>Rows</Fit>
      </div>
      <div className="mt-[6px] ml-[5px] h-[45px] w-[213px] shrink-0 border border-dashed border-[#c8c6c4] bg-white px-[3px] pt-1">
        <Chip label="Item" w={30} />
      </div>
      <div className="mt-[13px] h-5 shrink-0 pl-[15px]">
        <Fit w={58}>Columns</Fit>
      </div>
      <div className="mt-[7px] ml-[5px] h-[35px] w-[213px] shrink-0 border border-dashed border-[#c8c6c4] bg-white pl-[13px] leading-[31px]">
        <Fit w={134}>Add data fields here</Fit>
      </div>
      <div className="mt-[13px] h-5 shrink-0 pl-[15px]">
        <Fit w={43}>Values</Fit>
      </div>
      <div className="mt-[7px] ml-[5px] h-11 w-[213px] shrink-0 border border-dashed border-[#c8c6c4] bg-white px-[3px] pt-[3px]">
        <Chip label="Sum of Total Sale" w={114} />
      </div>
      <div className="mt-[14px] h-5 shrink-0 pl-[15px] font-semibold text-[#484644]">
        <Fit w={87}>Drill through</Fit>
      </div>
      <div className="mt-[11px] flex h-5 shrink-0 items-center pl-[15px]">
        <Fit w={84}>Cross-report</Fit>
        <div className="ml-[59px] flex h-5 w-10 items-center gap-[3px] rounded-full border border-[#797775] bg-white pl-[5px] text-[11px] text-[#605e5c]">
          <div className="size-[10px] rounded-full bg-[#605e5c]" />
          <Fit w={16}>Off</Fit>
        </div>
      </div>
      <div className="mt-[14px] flex h-5 shrink-0 items-start pl-[15px]">
        <div className="mt-[2px] w-[143px]">
          <Fit w={93}>Keep all filters</Fit>
        </div>
        <div className="flex h-5 w-10 shrink-0 items-center gap-[3px] rounded-full bg-[#117865] pl-[6px] text-[11px] text-white">
          <Fit w={15}>On</Fit>
          <div className="size-[10px] rounded-full bg-white" />
        </div>
      </div>
    </div>
  );
}

/* ---------- data pane ---------- */

type Field = { name: string; w: number; on?: boolean; kind?: "sum" | "date" };

const fields: Field[] = [
  { name: "Cost", w: 30, kind: "sum" },
  { name: "Customer", w: 64 },
  { name: "Date", w: 31, kind: "date" },
  { name: "Item", w: 30, on: true },
  { name: "Total Sale", w: 62, on: true, kind: "sum" },
  { name: "Units", w: 34, kind: "sum" },
];

function DataPane() {
  return (
    <div className="flex w-[226px] shrink-0 flex-col border-l border-[#dcdad8] bg-[#f3f2f1] text-sm leading-5 text-[#323130]">
      <div className="flex h-[50px] items-center justify-between pr-[10px] pl-[10px]">
        <Fit w={43} className="text-lg font-semibold text-[#252423]">
          Data
        </Fit>
        <DoubleChevron />
      </div>
      <div className="mt-[7px] ml-[5px] flex h-[30px] w-[215px] items-center rounded border border-b-[1.500px] border-[#d1d1d1] border-b-[#605e5c] bg-white pl-[14px] text-base text-[#605e5c]">
        <svg width="19" height="19" viewBox="0 0 19 19" fill="none" stroke="#484644" strokeWidth="1.300">
          <circle cx="8" cy="7.500" r="6.500" />
          <path d="M12.500 12.500l5.500 5.500" />
        </svg>
        <Fit w={51} className="mt-0.5 ml-2">
          Search
        </Fit>
      </div>
      <div className="mt-[12px] flex h-[30px] items-center pl-4">
        <Chevron w={15} h={8} />
        <div className="relative ml-[5px] h-4 w-[23px]">
          <svg width="16" height="16" viewBox="0 0 16 16" fill="none" stroke="#252423" strokeWidth="1.300" className="-mt-0.5">
            <rect x=".700" y=".700" width="14.500" height="14.500" rx="2.500" />
            <path d="M5.500 1v14M10.500 1v14M1 5.500h14M1 10.500h14" />
          </svg>
          <svg width="15" height="15" viewBox="0 0 15 15" className="absolute top-[7px] left-2">
            <circle cx="7.500" cy="7.500" r="7.500" fill="#117865" />
            <path d="M4.500 7.500l2 2 4-4" fill="none" stroke="#fff" strokeWidth="1.500" />
          </svg>
        </div>
        <Fit w={50}>Dataset</Fit>
      </div>
      {fields.map((f) => (
        <div key={f.name} className="flex h-[30px] items-center pl-[38px]">
          <div className="w-[17px]">
            {f.kind === "date" && (
              <svg width="8" height="14" viewBox="0 0 8 14" fill="none" stroke="#484644" strokeWidth="1.200">
                <path d="M.700.700 7 7 .700 13.300" />
              </svg>
            )}
          </div>
          {f.on ? (
            <svg width="15" height="15" viewBox="0 0 15 15">
              <rect width="15" height="15" rx="2" fill="#117865" />
              <path d="M3 7.500l3 3L12 4.300" fill="none" stroke="#fff" strokeWidth="1.400" />
            </svg>
          ) : (
            <div className="size-[15px] rounded-[2px] border border-[#797775]" />
          )}
          <div className="flex w-[32px] pl-[10px]">
            {f.kind === "sum" && (
              <svg width="15" height="16" viewBox="0 0 15 16" fill="none" stroke="#252423" strokeWidth="1.300">
                <path d="M14 3V1H1.500L8 7.800 1.500 15H14v-2" />
              </svg>
            )}
            {f.kind === "date" && (
              <svg width="16" height="16" viewBox="0 0 16 16" fill="none" stroke="#323130" strokeWidth="1.500">
                <rect x="1" y="1" width="14" height="14" rx="2.500" />
                <path d="M1 4.500h14" />
                <path d="M7.300 8.500h1.500M10.700 8.500h1.500M4 8.500h1.500M4 11.700h1.500M7.300 11.700h1.500" strokeWidth="1.700" />
              </svg>
            )}
          </div>
          <Fit w={f.w}>{f.name}</Fit>
        </div>
      ))}
    </div>
  );
}

export default function App() {
  return (
    <div className="flex h-[908px] w-[1920px] flex-col overflow-hidden bg-white font-['Open_Sans','Noto_Sans',sans-serif]">
      <MenuBar />
      <Ribbon />
      <div className="flex h-[750px]">
        <Rail />
        <Canvas />
        <Filters />
        <Visualizations />
        <DataPane />
      </div>
    </div>
  );
}
